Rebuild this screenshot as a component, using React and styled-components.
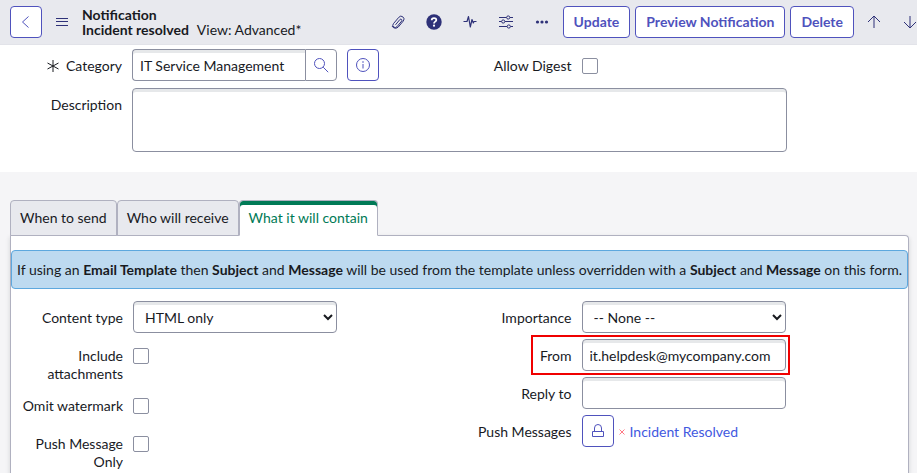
import React from "react";
import styled, { createGlobalStyle, css } from "styled-components";

const c = {
  text: "#181a1f",
  primary: "#4f52bd",
  icon: "#2e3178",
  border: "#8b8fa0",
  line: "#b0b1c0",
  link: "#4259e0",
};

const GlobalStyle = createGlobalStyle`
  *, *::before, *::after { box-sizing: border-box; }
  body { margin: 0; background: #f5f5f7; }
  body, button, input, select, textarea {
    font-family: Lato, "Open Sans", sans-serif;
    font-size: 14px;
    line-height: 18px;
    color: ${c.text};
  }
  svg { display: block; }
`;

const Page = styled.div`
  min-height: 100vh;
  display: flex;
  flex-direction: column;
`;

const Header = styled.header`
  display: flex;
  align-items: center;
  height: 45px;
  padding: 0 0 1px 10px;
  background: #e8e9ee;
  border-bottom: 1px solid #e2e3e9;
`;

const OutlineButton = styled.button`
  width: 32px;
  height: 32px;
  flex: none;
  display: grid;
  place-items: center;
  padding: 0;
  color: ${c.primary};
  background: #fff;
  border: 1px solid ${c.primary};
  border-radius: 4px;
`;

const MenuButton = styled.button`
  display: grid;
  place-items: center;
  width: 40px;
  height: 32px;
  padding: 0;
  border: 0;
  background: none;
  color: ${c.icon};
`;

const Title = styled.h1`
  flex: 1;
  margin: 0;
  font-size: 14px;
  line-height: 15px;
  font-weight: 700;
  white-space: nowrap;
`;

const TitleLine = styled.span`
  display: block;
`;

const View = styled.span`
  margin-left: 8px;
  font-weight: 400;
`;

const IconGroup = styled.div`
  display: flex;
  margin-right: 3px;
`;

const IconButton = styled.button`
  display: grid;
  place-items: center;
  width: 36px;
  height: 32px;
  padding: 0;
  border: 0;
  background: none;
  color: ${c.icon};
`;

const Actions = styled.div`
  display: flex;
  gap: 5px;
`;

const ActionButton = styled.button`
  height: 32px;
  padding: 0 10px;
  font-weight: 700;
  white-space: nowrap;
  color: ${c.primary};
  background: #fff;
  border: 1px solid ${c.primary};
  border-radius: 4px;
`;

const RecordNav = styled.nav`
  display: flex;
  margin-left: 2px;
  margin-right: -11px;
  overflow: hidden;
`;

const MainForm = styled.form`
  display: grid;
  gap: 1px;
  padding: 4px 8px 14px 10px;
  background: #fff;
`;

const Columns = styled.div`
  display: grid;
  grid-template-columns: 1fr 1fr;
`;

const Column = styled.div`
  display: flex;
  flex-direction: column;
`;

const Row = styled.div`
  position: relative;
  display: flex;
  align-items: flex-start;
  gap: 10px;
  width: ${(p) => (p.$wide ? "777px" : "326px")};
  max-width: 100%;
  margin-bottom: 6px;
  ${(p) =>
    p.$highlight &&
    css`
      &::after {
        content: "";
        position: absolute;
        inset: -4px -4px -4px 71px;
        border: 2px solid #f00000;
        pointer-events: none;
      }
    `}
`;

const Label = styled.label`
  flex: none;
  width: 112px;
  padding-top: 8px;
  text-align: right;
`;

const Required = styled.span`
  display: inline-block;
  vertical-align: -1px;
  margin-right: 7px;
`;

const control = css`
  min-width: 0;
  background: #fff;
  border: 1px solid ${c.border};
  border-radius: 4px;
  box-shadow: inset 0 3px #e6e8ea;
  outline: none;
`;

const TextInput = styled.input`
  ${control}
  flex: 1;
  height: 32px;
  padding: 0 7px;
`;

const TextArea = styled.textarea`
  ${control}
  flex: 1;
  height: 64px;
  padding: 8px 7px;
  resize: none;
`;

const Select = styled.select`
  ${control}
  flex: 1;
  height: 32px;
  padding: 0 7px;
`;

const CheckSlot = styled.div`
  display: flex;
  align-items: center;
  height: 32px;
  padding-top: 2px;
`;

const Checkbox = styled.input`
  appearance: none;
  width: 16px;
  height: 16px;
  margin: 0;
  background: #fff;
  border: 1px solid ${c.border};
  border-radius: 2px;
  &:checked {
    background: ${c.primary};
  }
`;

const Lookup = styled.div`
  display: flex;
  flex: none;
  width: 205px;
  ${TextInput} {
    border-radius: 4px 0 0 4px;
    border-right: 0;
  }
`;

const LookupButton = styled.button`
  display: grid;
  place-items: center;
  flex: none;
  width: 32px;
  height: 32px;
  padding: 0;
  color: ${c.primary};
  background: #fff;
  border: 1px solid ${c.border};
  border-radius: 0 4px 4px 0;
`;

const Section = styled.section`
  flex: 1;
  display: flex;
  flex-direction: column;
  padding: 28px 8px 0 10px;
`;

const Tabs = styled.div`
  display: flex;
`;

const Tab = styled.button`
  position: relative;
  height: 36px;
  margin-bottom: -1px;
  padding: 0 9px;
  white-space: nowrap;
  color: ${(p) => (p.$active ? "#007a56" : c.text)};
  background: ${(p) => (p.$active ? "#fff" : "#e8e9ee")};
  border: 1px solid ${c.line};
  border-bottom-color: ${(p) => (p.$active ? "#fff" : c.line)};
  border-radius: 4px 4px 0 0;
  box-shadow: ${(p) => (p.$active ? "inset 0 4px #007a56" : "none")};
`;

const Panel = styled.div`
  flex: 1;
  padding-top: 14px;
  background: #fff;
  border: 1px solid ${c.line};
  border-bottom: 0;
  border-radius: 0 4px 0 0;
  box-shadow: 0 2px 5px rgba(24, 26, 31, 0.14);
`;

const Message = styled.p`
  margin: 0 0 12px;
  padding: 10px 4px 9px;
  text-align: center;
  background: #bddaf0;
  border: 1px solid #5da8de;
  border-radius: 4px;
`;

const Watched = styled.div`
  display: flex;
  align-items: center;
  gap: 5px;
  white-space: nowrap;
`;

const RemoveButton = styled.button`
  display: grid;
  place-items: center;
  width: 6px;
  padding: 2px 0 0;
  color: #ff7a85;
  background: none;
  border: 0;
`;

const Link = styled.a`
  padding-top: 2px;
  color: ${c.link};
  text-decoration: none;
`;

function Glyph({ w = 16, h = w, sw = 1, children }) {
  return (
    <svg
      width={w}
      height={h}
      viewBox={`0 0 ${w} ${h}`}
      fill="none"
      stroke="currentColor"
      strokeWidth={sw}
      aria-hidden="true"
    >
      {children}
    </svg>
  );
}

function CheckRow({ id, label }) {
  return (
    <Row>
      <Label htmlFor={id}>{label}</Label>
      <CheckSlot>
        <Checkbox id={id} type="checkbox" />
      </CheckSlot>
    </Row>
  );
}

export default function App() {
  return (
    <Page>
      <GlobalStyle />
      <Header>
        <OutlineButton aria-label="Back">
          <Glyph><path d="M10.500 2.500 4.500 8l6 5.500" /></Glyph>
        </OutlineButton>
        <MenuButton aria-label="Menu">
          <Glyph w={12}><path d="M0 2.500h12M0 5.500h12M0 9.500h12" /></Glyph>
        </MenuButton>
        <Title>
          <TitleLine>Notification</TitleLine>
          <TitleLine>
            Incident resolved<View>View: Advanced*</View>
          </TitleLine>
        </Title>
        <IconGroup>
          <IconButton aria-label="Attachments">
            <Glyph>
              <path d="M5.500 10.800 10 5.400a1.200 1.200 0 0 1 1.800 1.500L7 12.700a2.300 2.300 0 0 1-3.600-3L8.800 3.300a2.900 2.900 0 0 1 4.500 3.700L8.300 13a3.900 3.900 0 0 1-6.300-1" />
            </Glyph>
          </IconButton>
          <IconButton aria-label="Help">
            <Glyph>
              <circle cx="8" cy="8" r="7.700" fill="currentColor" stroke="none" />
              <path d="M5.700 6.200C5.700 3.300 10.400 3.400 10.300 6c0 1.700-2.300 1.600-2.300 3.500" stroke="#fff" strokeWidth="1.800" />
              <circle cx="8" cy="11.700" r="1.100" fill="#fff" stroke="none" />
            </Glyph>
          </IconButton>
          <IconButton aria-label="Activity stream">
            <Glyph sw={1.2}>
              <path d="M1.500 7.500H5L6.500 2.500 8.300 13 10 5.500 11.300 9 12 7.500h2.500" strokeLinejoin="round" />
            </Glyph>
          </IconButton>
          <IconButton aria-label="Personalize form">
            <Glyph>
              <path d="M1 3.500h7.500M12 3.500h3M1 7.500h2.500M7 7.500h8M1 12.500h8M12.500 12.500H15" />
              <circle cx="10.200" cy="3.500" r="1.600" />
              <circle cx="5.200" cy="7.500" r="1.600" />
              <circle cx="10.800" cy="12.500" r="1.600" />
            </Glyph>
          </IconButton>
          <IconButton aria-label="More options">
            <Glyph>
              <g fill="currentColor" stroke="none">
                <circle cx="3.500" cy="8" r="1.600" />
                <circle cx="8" cy="8" r="1.600" />
                <circle cx="12.500" cy="8" r="1.600" />
              </g>
            </Glyph>
          </IconButton>
        </IconGroup>
        <Actions>
          <ActionButton>Update</ActionButton>
          <ActionButton>Preview Notification</ActionButton>
          <ActionButton>Delete</ActionButton>
        </Actions>
        <RecordNav>
          <IconButton aria-label="Previous record">
            <Glyph><path d="M8 14V2M2 8l6-6 6 6" /></Glyph>
          </IconButton>
          <IconButton aria-label="Next record">
            <Glyph><path d="M8 2v12M2 8l6 6 6-6" /></Glyph>
          </IconButton>
        </RecordNav>
      </Header>

      <MainForm>
        <Columns>
          <Row>
            <Label htmlFor="category">
              <Required>
                <Glyph w={12}><path d="M6 0v12M.500 3l11 6M11.500 3l-11 6" /></Glyph>
              </Required>
              Category
            </Label>
            <Lookup>
              <TextInput id="category" defaultValue="IT Service Management" />
              <LookupButton type="button" aria-label="Look up category">
                <Glyph>
                  <circle cx="6.500" cy="6.500" r="5" />
                  <path d="m10.200 10.200 5 5" />
                </Glyph>
              </LookupButton>
            </Lookup>
            <OutlineButton type="button" aria-label="Preview category">
              <Glyph>
                <circle cx="8" cy="8" r="6.500" />
                <path d="M8 7v4.500" />
                <circle cx="8" cy="5" r=".8" fill="currentColor" stroke="none" />
              </Glyph>
            </OutlineButton>
          </Row>
          <CheckRow id="digest" label="Allow Digest" />
        </Columns>
        <Row $wide>
          <Label htmlFor="description">Description</Label>
          <TextArea id="description" />
        </Row>
      </MainForm>

      <Section>
        <Tabs role="tablist">
          <Tab role="tab" aria-selected="false">When to send</Tab>
          <Tab role="tab" aria-selected="false">Who will receive</Tab>
          <Tab role="tab" aria-selected="true" $active>What it will contain</Tab>
        </Tabs>
        <Panel role="tabpanel">
          <Message>
            If using an <b>Email Template</b> then <b>Subject</b> and <b>Message</b> will be used
            from the template unless overridden with a <b>Subject</b> and <b>Message</b> on this form.
          </Message>
          <Columns>
            <Column>
              <Row>
                <Label htmlFor="content-type">Content type</Label>
                <Select id="content-type">
                  <option>HTML only</option>
                </Select>
              </Row>
              <CheckRow id="attachments" label="Include attachments" />
              <CheckRow id="watermark" label="Omit watermark" />
              <CheckRow id="push-only" label="Push Message Only" />
            </Column>
            <Column>
              <Row>
                <Label htmlFor="importance">Importance</Label>
                <Select id="importance">
                  <option>-- None --</option>
                </Select>
              </Row>
              <Row $highlight>
                <Label htmlFor="from">From</Label>
                <TextInput id="from" defaultValue="it.helpdesk@mycompany.com" />
              </Row>
              <Row>
                <Label htmlFor="reply-to">Reply to</Label>
                <TextInput id="reply-to" />
              </Row>
              <Row>
                <Label htmlFor="push-messages">Push Messages</Label>
                <Watched>
                  <OutlineButton id="push-messages" aria-label="Unlock Push Messages">
                    <Glyph>
                      <path d="M2.500 8.500h11v5h-11zM4.500 8.500V5a3.500 3.500 0 0 1 7 0v3.500" />
                    </Glyph>
                  </OutlineButton>
                  <RemoveButton aria-label="Remove Incident Resolved">
                    <Glyph w={6}><path d="m.500.500 5 5m0-5-5 5" /></Glyph>
                  </RemoveButton>
                  <Link href="#incident-resolved">Incident Resolved</Link>
                </Watched>
              </Row>
            </Column>
          </Columns>
        </Panel>
      </Section>
    </Page>
  );
}
